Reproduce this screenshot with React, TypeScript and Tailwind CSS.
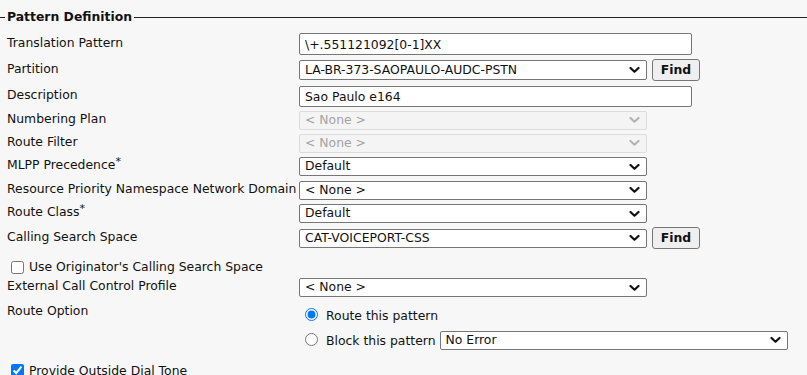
import React from "react";

type Opt = { value: string; disabled?: boolean };

const Chevron = ({ disabled }: { disabled?: boolean }) => (
  <svg
    className="pointer-events-none absolute right-[7px] top-1/2 -translate-y-1/2"
    width="11"
    height="7"
    viewBox="0 0 11 7"
    fill="none"
    stroke={disabled ? "#b4b4b4" : "#111"}
    strokeWidth="2.2"
    strokeLinecap="round"
    strokeLinejoin="round"
  >
    <path d="M1.5 1.5 L5.5 5.2 L9.5 1.5" />
  </svg>
);

const Select = ({ value, disabled, width = "w-[348px]", height = "h-[19px]" }: Opt & { width?: string; height?: string }) => (
  <div className={`relative ${width} ${height}`}>
    <select
      disabled={disabled}
      defaultValue={value}
      className={`h-full w-full appearance-none rounded-[2px] border pl-[5px] text-[12.4px] leading-none outline-none ${
        disabled
          ? "border-[#dcdcdc] bg-[#f4f4f4] text-[#a3a3a3]"
          : "border-[#767676] bg-white text-[#111]"
      }`}
    >
      <option value={value}>{value}</option>
    </select>
    <Chevron disabled={disabled} />
  </div>
);

const TextInput = ({ value, height = "h-[22px]" }: { value: string; height?: string }) => (
  <input
    type="text"
    defaultValue={value}
    className={`${height} w-[393px] rounded-[2px] border border-[#767676] bg-white pl-[5px] text-[12.4px] text-[#111] outline-none`}
  />
);

const FindButton = () => (
  <button className="ml-[5px] h-[22px] w-[48px] rounded-[3px] border border-[#767676] bg-[#efefef] text-[12.4px] font-bold text-[#111]">
    Find
  </button>
);

const Row = ({ label, star, h, children }: { label: string; star?: boolean; h: string; children: React.ReactNode }) => (
  <div className={`flex items-center ${h}`}>
    <div className="w-[299px] shrink-0 pb-[2px] pl-[7px] whitespace-nowrap">
      {label}
      {star && <span className="relative -top-[4px] text-[11px]">*</span>}
    </div>
    {children}
  </div>
);

export default function App() {
  return (
    <div
      className="h-[375px] w-[807px] overflow-hidden bg-[#f7f7f7] text-[12.4px] text-[#111]"
      style={{ fontFamily: '"DejaVu Sans", Verdana, sans-serif' }}
    >
      {/* fieldset legend */}
      <div className="flex items-center pt-[9px]">
        <div className="h-px w-[5px] bg-[#222]" />
        <span className="px-[2px] text-[12.4px] font-bold leading-[16px]">Pattern Definition</span>
        <div className="h-px flex-1 bg-[#222]" />
      </div>

      <div className="mt-[6px] flex flex-col">
        <Row label="Translation Pattern" h="h-[26px]">
          <TextInput value="\+.551121092[0-1]XX" />
        </Row>
        <Row label="Partition" h="h-[26px]">
          <Select value="LA-BR-373-SAOPAULO-AUDC-PSTN" height="h-[20px]" />
          <FindButton />
        </Row>
        <Row label="Description" h="h-[26px]">
          <TextInput value="Sao Paulo e164" height="h-[21px]" />
        </Row>
        <Row label="Numbering Plan" h="h-[22px]">
          <Select value="< None >" disabled />
        </Row>
        <Row label="Route Filter" h="h-[24px]">
          <Select value="< None >" disabled />
        </Row>
        <Row label="MLPP Precedence" star h="h-[23px]">
          <Select value="Default" />
        </Row>
        <Row label="Resource Priority Namespace Network Domain" h="h-[24px]">
          <Select value="< None >" />
        </Row>
        <Row label="Route Class" star h="h-[23px]">
          <Select value="Default" />
        </Row>
        <Row label="Calling Search Space" h="h-[26px]">
          <Select value="CAT-VOICEPORT-CSS" />
          <FindButton />
        </Row>

        <label className="flex h-[26px] items-center gap-[5px] pl-[11px] pt-[6px]">
          <input type="checkbox" className="m-0 h-[13px] w-[13px]" />
          <span>Use Originator's Calling Search Space</span>
        </label>

        <Row label="External Call Control Profile" h="h-[21px]">
          <Select value="< None >" />
        </Row>

        <div className="flex pt-[4px]">
          <div className="w-[299px] shrink-0 pl-[7px]">Route Option</div>
          <div className="flex flex-col pl-[6px]">
            <label className="flex h-[24px] items-center gap-[8px]">
              <input type="radio" name="route" defaultChecked className="m-0 h-[13px] w-[13px] accent-[#0075ff]" />
              <span className="pt-[5px]">Route this pattern</span>
            </label>
            <label className="flex h-[26px] items-center gap-[8px]">
              <input type="radio" name="route" className="m-0 h-[13px] w-[13px]" />
              <span className="pt-[4px]">Block this pattern</span>
              <div className="-ml-[4px] pt-[2px]">
                <Select value="No Error" height="h-[19px]" />
              </div>
            </label>
          </div>
        </div>

        <label className="mt-[8px] flex items-center gap-[5px] pl-[11px]">
          <input type="checkbox" defaultChecked className="m-0 h-[13px] w-[13px] accent-[#0075ff]" />
          <span className="pt-[2px]">Provide Outside Dial Tone</span>
        </label>
      </div>
    </div>
  );
}
